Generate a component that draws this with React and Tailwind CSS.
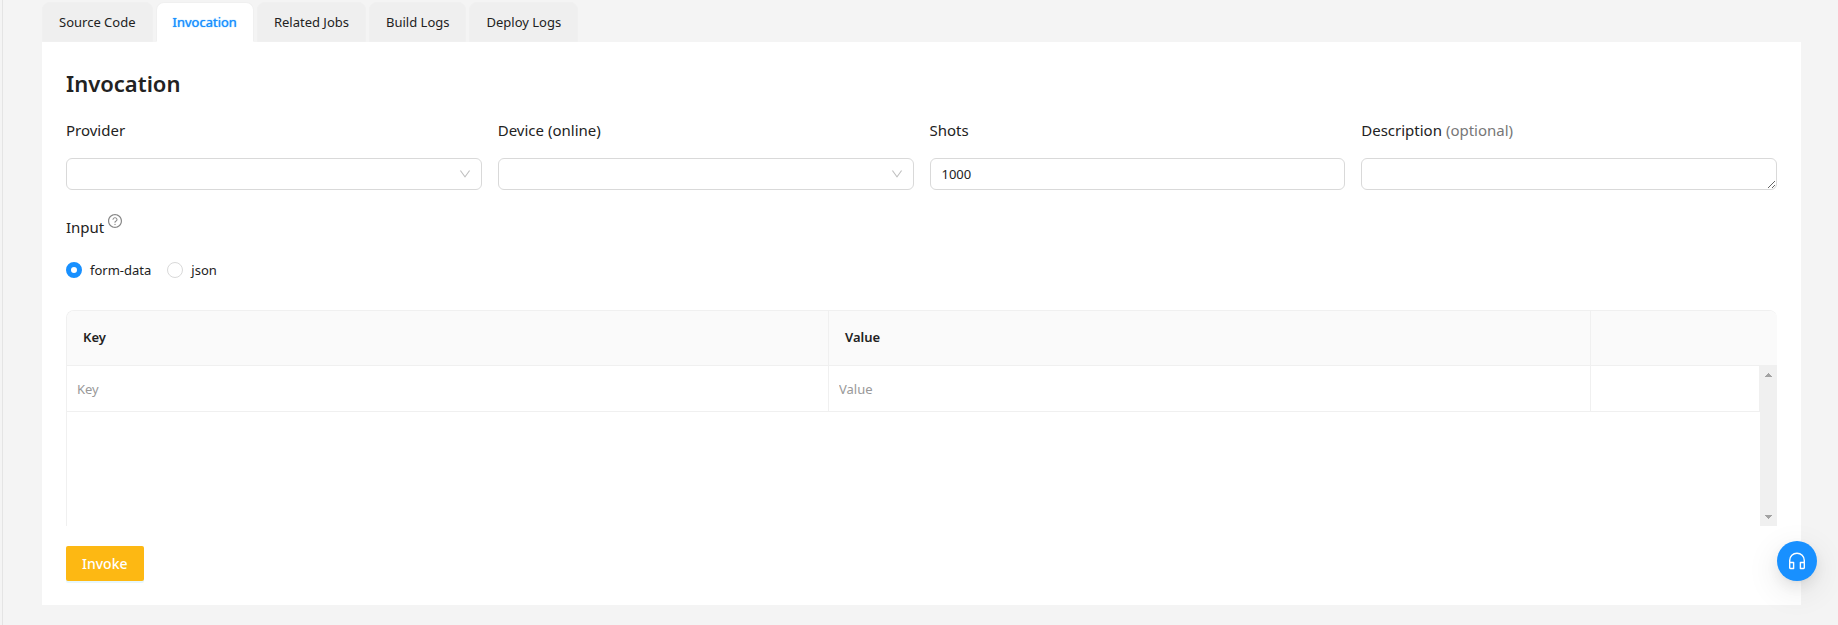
const TABS = ["Source Code", "Invocation", "Related Jobs", "Build Logs", "Deploy Logs"];

const TAB_BASE =
  "h-10 rounded-t-lg border px-4 text-[13px] leading-5 whitespace-nowrap";

function Tab({ label, active }) {
  return (
    <button
      type="button"
      role="tab"
      aria-selected={active}
      className={
        active
          ? `${TAB_BASE} border-[#f0f0f0] border-b-white bg-white text-[#1890ff] text-shadow-[0_0_1px_currentcolor]`
          : `${TAB_BASE} border-[#f0f0f0] bg-[#efefef] text-[#222]`
      }
    >
      {label}
    </button>
  );
}

function Field({ id, label, note, children }) {
  return (
    <div className="flex min-w-0 flex-col gap-3.5">
      <label htmlFor={id} className="text-[15px] leading-[28px] text-[#222]">
        {label}
        {note && <span className="text-[#777]"> {note}</span>}
      </label>
      {children}
    </div>
  );
}

const CONTROL =
  "block h-8 w-full rounded-md border border-[#d9d9d9] bg-white px-[11px] text-[13px] text-[#222] outline-none focus:border-[#1890ff]";

function SelectBox({ id }) {
  return (
    <div className="relative">
      <select id={id} className={`${CONTROL} appearance-none`} defaultValue="">
        <option value=""></option>
      </select>
      <svg
        viewBox="64 64 896 896"
        className="pointer-events-none absolute top-1/2 right-[11px] size-3 -translate-y-1/2 fill-[#bfbfbf]"
        aria-hidden="true"
      >
        <path d="M884 256h-75c-5.1 0-9.900 2.500-12.900 6.600L512 654.200 227.900 262.600c-3-4.100-7.800-6.600-12.900-6.600h-75c-6.500 0-10.300 7.400-6.500 12.700l352.600 486.100c12.800 17.600 39 17.600 51.700 0l352.600-486.100c3.900-5.300.1-12.700-6.400-12.700z" />
      </svg>
    </div>
  );
}

function Radio({ label, checked }) {
  return (
    <label className="flex items-center gap-2 text-[13px] leading-5 text-[#222]">
      <input
        type="radio"
        name="format"
        defaultChecked={checked}
        className="size-4 appearance-none rounded-full border border-[#d9d9d9] bg-white checked:border-[5px] checked:border-[#1890ff]"
      />
      {label}
    </label>
  );
}

function HelpIcon() {
  return (
    <svg viewBox="64 64 896 896" className="size-3.5 fill-[#888]" aria-hidden="true">
      <path d="M512 64C264.600 64 64 264.600 64 512s200.600 448 448 448 448-200.600 448-448S759.400 64 512 64zm0 820c-205.400 0-372-166.600-372-372s166.600-372 372-372 372 166.600 372 372-166.600 372-372 372z" />
      <path d="M623.600 316.700C593.600 290.400 554 276 512 276s-81.600 14.500-111.600 40.700C369.200 344 352 380.700 352 420v7.600c0 4.400 3.600 8 8 8h48c4.400 0 8-3.600 8-8V420c0-44.100 43.100-80 96-80s96 35.900 96 80c0 31.100-22 59.600-56.100 72.700-21.200 8.100-39.200 22.300-52.100 40.900-13.100 19-19.900 41.800-19.900 64.900V620c0 4.400 3.600 8 8 8h48c4.400 0 8-3.600 8-8v-22.700a48.300 48.300 0 0 1 30.900-44.800c59-22.700 97.100-74.700 97.100-132.500.1-39.300-17.100-76-48.300-103.300zM472 732a40 40 0 1 0 80 0 40 40 0 1 0-80 0z" />
    </svg>
  );
}

function ScrollRail() {
  return (
    <div className="flex h-40 flex-col items-center justify-between bg-[#f0f0f0] py-[7px]">
      <svg viewBox="0 0 7 4" className="h-1 w-[7px] fill-[#a3a3a3]" shapeRendering="crispEdges">
        <path d="M3 0h1v1h1v1h1v1h1v1H0V3h1V2h1V1h1z" />
      </svg>
      <svg viewBox="0 0 7 4" className="h-1 w-[7px] fill-[#a3a3a3]" shapeRendering="crispEdges">
        <path d="M3 4h1V3h1V2h1V1h1V0H0v1h1v1h1v1h1z" />
      </svg>
    </div>
  );
}

function ParamsTable() {
  const head = "h-[55px] border-b border-[#f0f0f0] bg-[#fafafa] px-4 text-left text-[13px] font-semibold text-[#222]";
  const cell = "h-[46px] border-r border-b border-[#f0f0f0] p-0";
  const input =
    "block h-[45px] w-full bg-transparent px-[10px] text-[13px] text-[#222] outline-none placeholder:text-[#999]";
  return (
    <div className="overflow-hidden rounded-t-lg border-t border-l border-[#f0f0f0]">
      <table className="w-full table-fixed border-separate border-spacing-0">
        <colgroup>
          <col />
          <col />
          <col className="w-[169px]" />
          <col className="w-[17px]" />
        </colgroup>
        <thead>
          <tr>
            <th className={`${head} border-r`}>Key</th>
            <th className={`${head} border-r`}>Value</th>
            <th className={head} colSpan={2}></th>
          </tr>
        </thead>
        <tbody>
          <tr>
            <td className={cell}>
              <input aria-label="Key" placeholder="Key" className={input} />
            </td>
            <td className={cell}>
              <input aria-label="Value" placeholder="Value" className={input} />
            </td>
            <td className={cell}></td>
            <td rowSpan={2} className="p-0 align-top" aria-hidden="true">
              <ScrollRail />
            </td>
          </tr>
          <tr>
            <td colSpan={3} className="h-[114px] p-0"></td>
          </tr>
        </tbody>
      </table>
    </div>
  );
}

function SupportButton() {
  return (
    <button
      type="button"
      aria-label="Support"
      className="fixed right-[21px] bottom-11 flex size-10 items-center justify-center rounded-full bg-[#1890ff] shadow-[0_6px_16px_0_rgba(0,0,0,0.08),0_3px_6px_-4px_rgba(0,0,0,0.12),0_9px_28px_8px_rgba(0,0,0,0.05)]"
    >
      <svg viewBox="0 0 18 18" className="size-[18px]" fill="none" stroke="#fff" aria-hidden="true">
        <path d="M1.700 10V8.500a7.300 7.300 0 0 1 14.600 0V10" strokeWidth="1.400" />
        <path d="M1.700 10.500h3.900v6H2.400a.7.7 0 0 1-.7-.7zM16.300 10.500h-3.900v6h3.200a.7.7 0 0 0 .7-.7z" strokeWidth="1.400" strokeLinejoin="round" />
      </svg>
    </button>
  );
}

export default function App() {
  return (
    <div className="flex min-h-screen bg-[#f4f4f4] pl-[2px] font-['Noto_Sans','Open_Sans',sans-serif]">
      <main className="min-w-0 flex-1 border-l border-[#e4e4e4] pt-[2px] pr-[37px] pb-5 pl-[39px]">
        <div role="tablist" className="flex gap-[3px]">
          {TABS.map((t) => (
            <Tab key={t} label={t} active={t === "Invocation"} />
          ))}
        </div>

        <section className="bg-white p-6">
          <h1 className="text-[22px] leading-[34px] font-semibold text-[#222]">Invocation</h1>

          <div className="mt-4 grid grid-cols-4 gap-4">
            <Field id="provider" label="Provider">
              <SelectBox id="provider" />
            </Field>
            <Field id="device" label="Device (online)">
              <SelectBox id="device" />
            </Field>
            <Field id="shots" label="Shots">
              <input id="shots" type="text" inputMode="numeric" defaultValue="1000" className={CONTROL} />
            </Field>
            <Field id="description" label="Description" note="(optional)">
              <textarea id="description" rows={1} className={`${CONTROL} resize py-1`} />
            </Field>
          </div>

          <div className="mt-6 flex items-start gap-1">
            <h2 className="text-[15px] leading-[26px] text-[#222]">Input</h2>
            <HelpIcon />
          </div>

          <div className="mt-5 flex gap-4">
            <Radio label="form-data" checked />
            <Radio label="json" />
          </div>

          <div className="mt-[30px]">
            <ParamsTable />
          </div>

          <button
            type="button"
            className="mt-5 h-[35px] rounded-xs bg-[#fdb813] px-4 text-[14px] font-medium text-white shadow-[0_2px_0_#e6f7ff]"
          >
            Invoke
          </button>
        </section>
      </main>
      <SupportButton />
    </div>
  );
}
